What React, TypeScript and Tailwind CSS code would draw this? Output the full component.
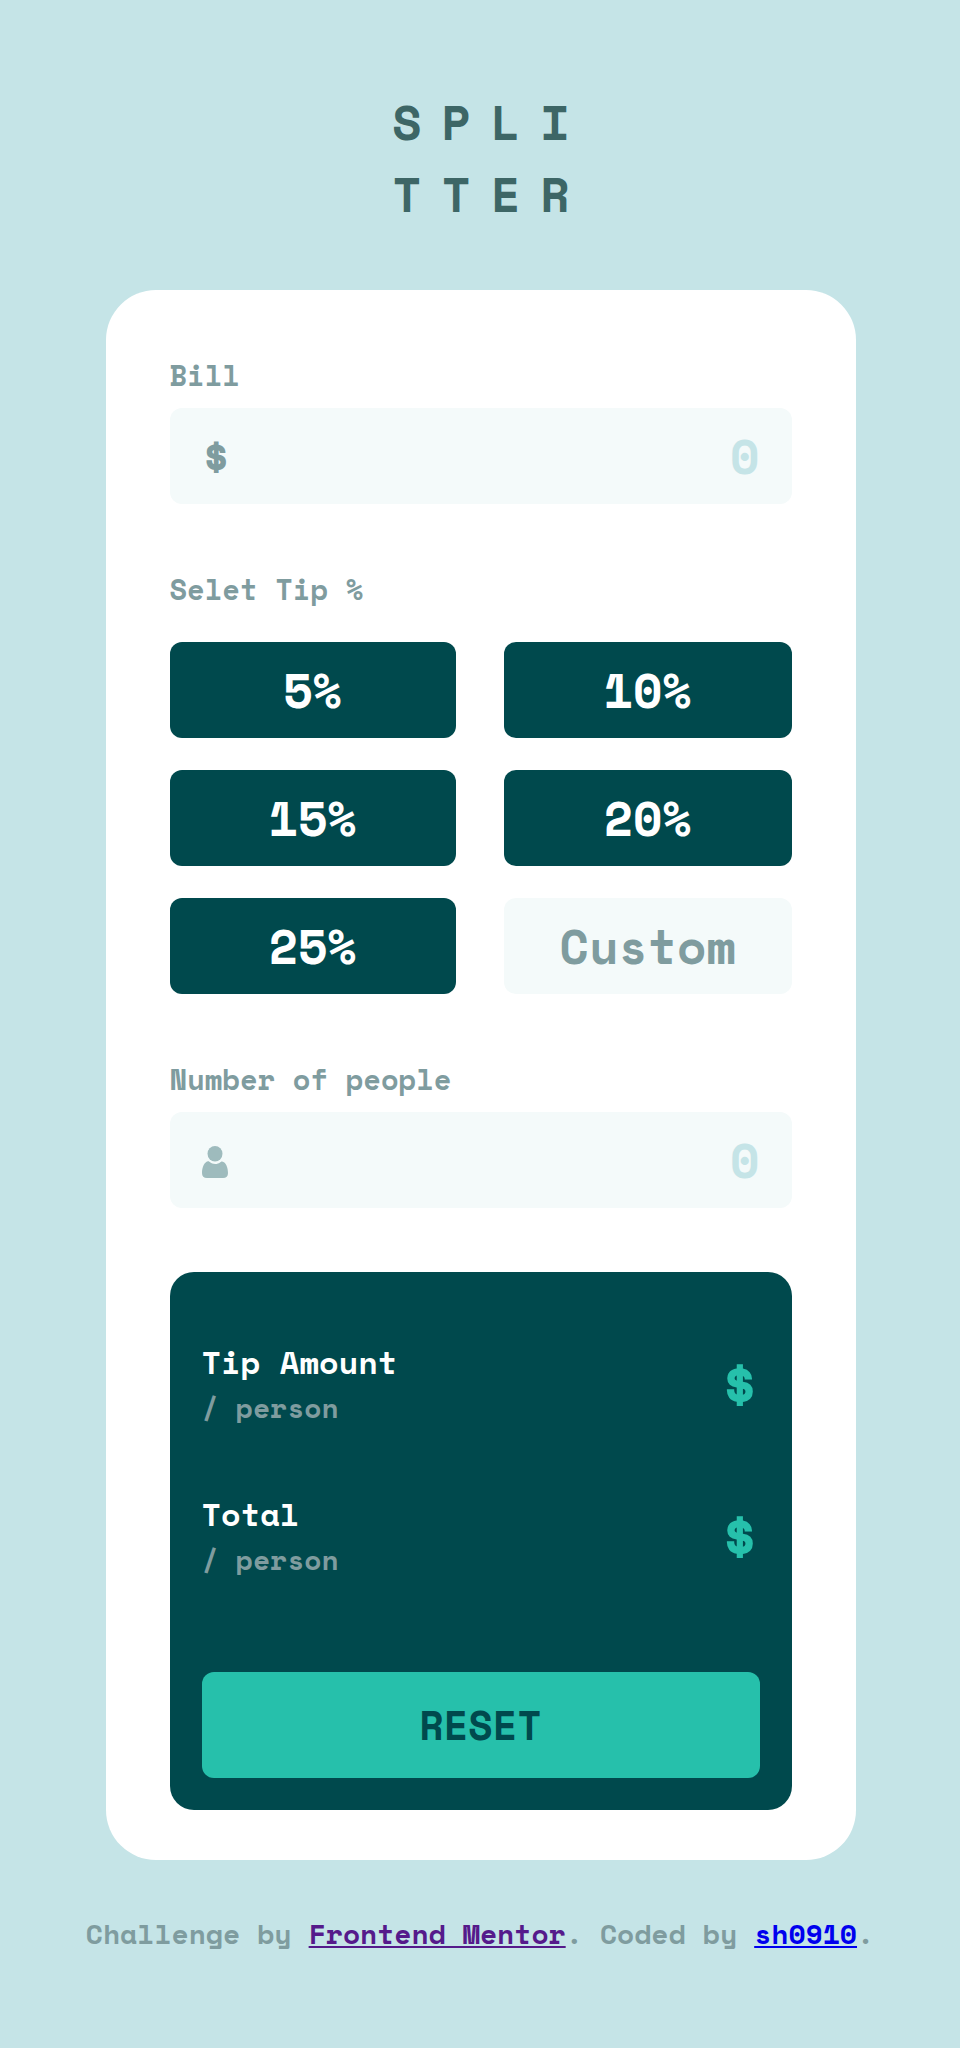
import type { ReactNode } from "react";

const tips = ["5%", "10%", "15%", "20%", "25%"];

function PersonIcon() {
  return (
    <svg className="mt-1" width="26" height="32" viewBox="0 0 26 32" fill="#9ebbbd" aria-hidden="true">
      <ellipse cx="13" cy="7.7" rx="7.5" ry="7.7" />
      <path d="M6.3 15.3C7.6 15.2 8.300 17.900 13.200 17.900C17.900 17.900 18.400 15.200 20.100 15.400C24 15.900 26 21.500 26 27C26 30.300 24.300 32 21 32H5C1.700 32 0 30.300 0 27C0 21 2.500 15.700 6.300 15.300Z" />
    </svg>
  );
}

function Field({ label, icon }: { label: string; icon: ReactNode }) {
  return (
    <label className="block">
      <span className="block text-[28.8px] leading-[44px]">{label}</span>
      <span className="mt-[11px] flex h-24 items-center rounded-xl bg-[#f4fafa] px-8">
        {icon}
        <input
          type="text"
          placeholder="0"
          className="h-full min-w-0 flex-1 bg-transparent pb-[2px] text-right text-[48px] text-[#00494d] outline-none placeholder:text-[#c5e4e7]"
        />
      </span>
    </label>
  );
}

function ResultRow({ title }: { title: string }) {
  return (
    <div className="flex items-center justify-between">
      <div>
        <p className="text-[32px] leading-[48px] text-white">{title}</p>
        <p className="text-[28px] leading-[44px]">/ person</p>
      </div>
      <span className="text-[64px] leading-[72px] text-[#26c0ab]">$</span>
    </div>
  );
}

export default function App() {
  return (
    <div className="flex h-[2048px] flex-col items-center bg-[#c5e4e7] pt-[86px] font-['Space_Mono','Liberation_Mono',monospace] font-bold text-[#7f9c9f]">
      <h1 className="pl-[22px] text-[48px] leading-[72px] tracking-[20px] text-[#3d6666]">
        SPLI
        <br />
        TTER
      </h1>

      <main className="mt-[60px] ml-[1px] h-[1570px] w-[750px] rounded-[50px] bg-white px-16 pt-[63px]">
        <Field label="Bill" icon={<span className="text-[48px] leading-[72px]">$</span>} />

        <section className="pt-[63px]">
          <h2 className="text-[28.8px] leading-[44px]">Selet Tip %</h2>
          <div className="mt-[31px] grid grid-cols-[286px_288px] gap-x-[48.2px] gap-y-8">
            {tips.map((tip) => (
              <button
                key={tip}
                type="button"
                className="h-24 rounded-xl bg-[#00494d] text-[48px] leading-[72px] text-white"
              >
                {tip}
              </button>
            ))}
            <input
              type="text"
              placeholder="Custom"
              className="h-24 w-full rounded-xl bg-[#f4fafa] pb-[2px] text-center text-[48px] text-[#00494d] outline-none placeholder:text-[#7f9c9f]"
            />
          </div>
        </section>

        <div className="pt-[63px]">
          <Field label="Number of people" icon={<PersonIcon />} />
        </div>

        <section className="mt-16 h-[538px] rounded-3xl bg-[#00494d] px-8 pt-[66px]">
          <div className="flex flex-col gap-[60px]">
            <ResultRow title="Tip Amount" />
            <ResultRow title="Total" />
          </div>
          <button
            type="button"
            className="mt-[90px] block h-[106px] w-full rounded-xl bg-[#26c0ab] text-[40px] leading-[60px] text-[#00494d]"
          >
            RESET
          </button>
        </section>
      </main>

      <footer className="mt-[53px] text-[28px] leading-[42px] whitespace-nowrap">
        Challenge by{" "}
        <a href="#mentor" className="text-[#551a8b] underline">
          Frontend Mentor
        </a>
        . Coded by{" "}
        <a href="#author" className="text-[#0000ee] underline">
          sh0910
        </a>
        .
      </footer>
    </div>
  );
}
